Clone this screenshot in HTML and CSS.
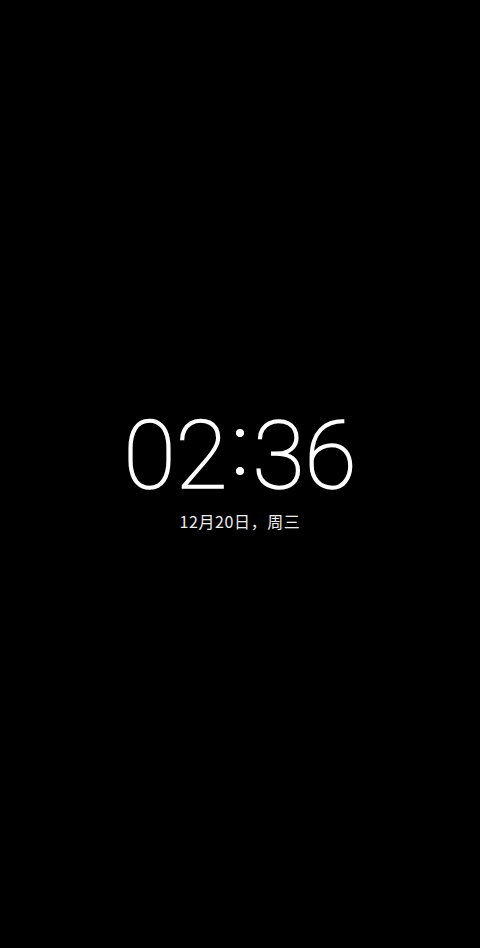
FILE: index.html
```html
<!DOCTYPE html>
<html lang="zh-CN">
<head>
<meta charset="utf-8">
<title>Clock</title>
<link rel="stylesheet" href="styles.css">
</head>
<body>
<main class="screen">
  <div class="clock">
    <div class="time">02<span class="colon">:</span>36</div>
    <div class="date">12月20日，周三</div>
  </div>
</main>
</body>
</html>
```
FILE: styles.css
```css
html, body {
  margin: 0;
  padding: 0;
  background: #000;
}
.screen {
  width: 480px;
  height: 948px;
  display: flex;
  flex-direction: column;
  align-items: center;
  padding-top: 404px;
  box-sizing: border-box;
}
.clock {
  display: flex;
  flex-direction: column;
  align-items: center;
}
.time {
  font-family: Roboto, "Noto Sans", sans-serif;
  font-weight: 100;
  font-size: 95px;
  line-height: 104px;
  color: #fff;
  -webkit-text-stroke: 1.6px #fff;
  letter-spacing: 0;
}
.colon {
  position: relative;
  color: transparent;
  -webkit-text-stroke: 0;
  display: inline-block;
  width: 25px;
  text-align: center;
}
.colon::before,
.colon::after {
  content: "";
  position: absolute;
  left: 50%;
  width: 8px;
  height: 8px;
  margin-left: -4px;
  border-radius: 50%;
  background: #fff;
}
.colon::before {
  top: 25px;
}
.colon::after {
  top: 63px;
}
.date {
  font-family: "Noto Sans CJK SC", sans-serif;
  font-size: 16px;
  line-height: 22px;
  color: #eee;
  letter-spacing: 0.6px;
  margin-top: 2px;
}
```
